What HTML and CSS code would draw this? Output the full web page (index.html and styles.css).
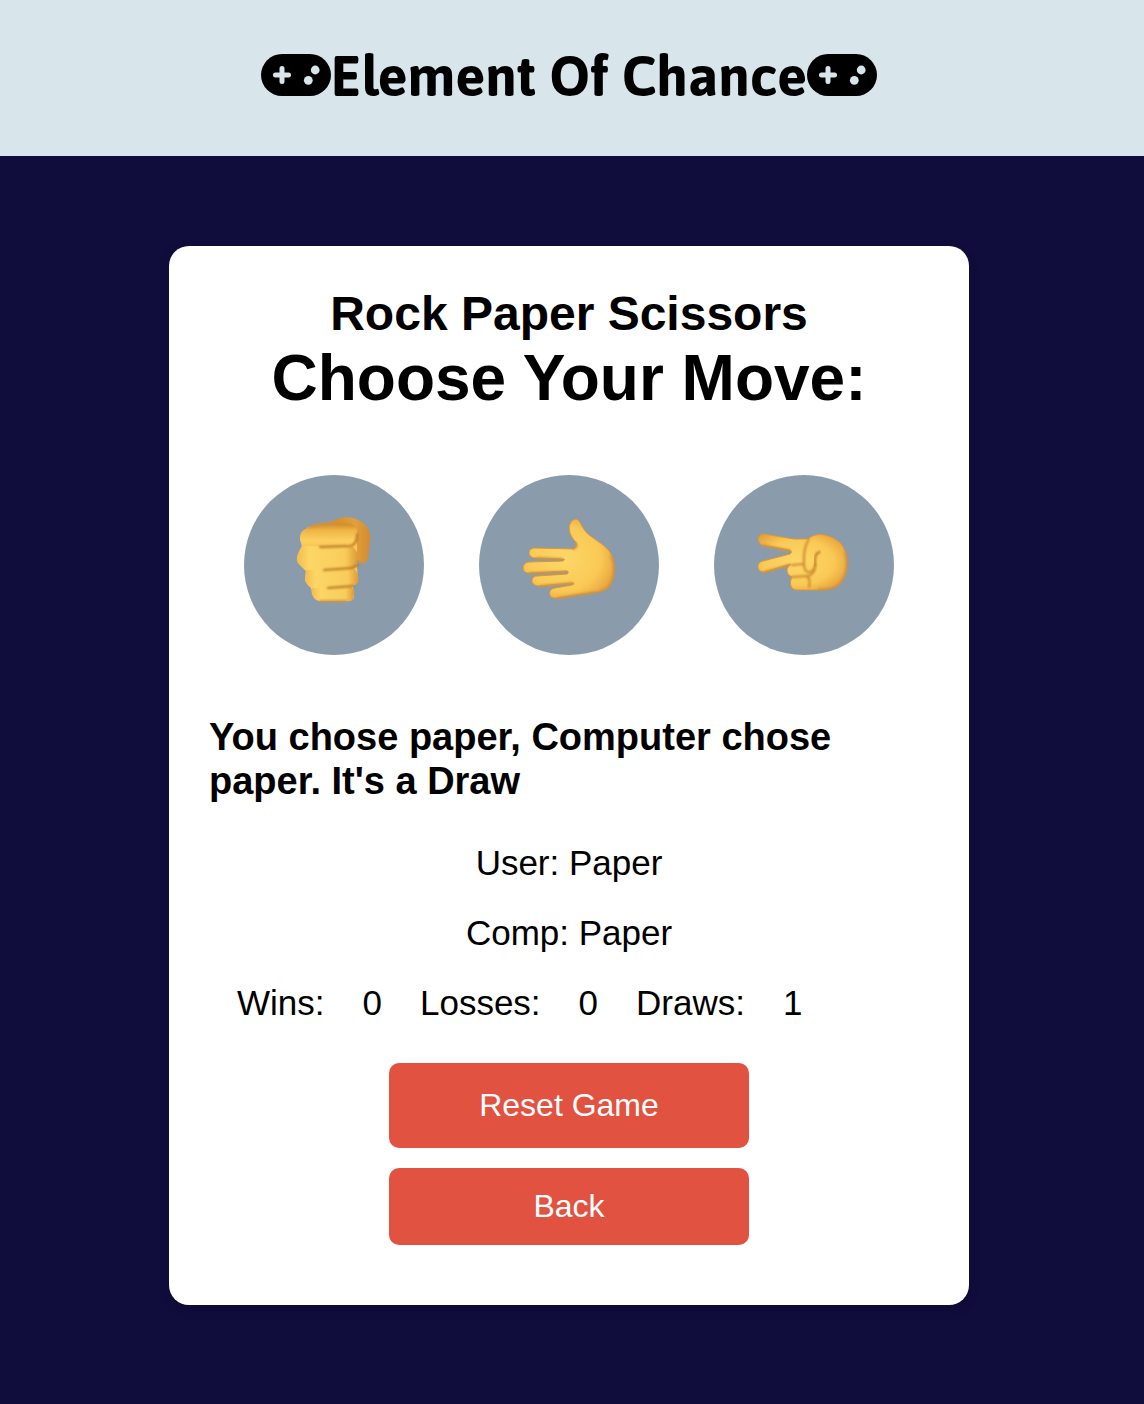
FILE: index.html
```html
<!DOCTYPE html>
<html lang="en">
<head>
<meta charset="utf-8">
<meta name="viewport" content="width=device-width, initial-scale=1">
<title>Element Of Chance</title>
<link rel="stylesheet" href="styles.css">
</head>
<body>
<header class="site-header">
  <svg class="gamepad" viewBox="0 0 70 42" aria-hidden="true"><use href="#pad"/></svg>
  <h1 class="site-title">Element Of Chance</h1>
  <svg class="gamepad" viewBox="0 0 70 42" aria-hidden="true">
    <defs>
      <g id="pad">
        <rect width="70" height="42" rx="21"/>
        <path class="cut-line" d="M14.500 21h13M21 14.500v13"/>
        <circle class="cut" cx="54.200" cy="16" r="4.400"/>
        <circle class="cut" cx="47.300" cy="26.300" r="4.400"/>
      </g>
    </defs>
    <use href="#pad"/>
  </svg>
</header>
<main class="page">
  <section class="card">
    <h2 class="game-name">Rock Paper Scissors</h2>
    <h3 class="prompt">Choose Your Move:</h3>
    <div class="moves">
      <button class="move" type="button" aria-label="Rock">
        <svg class="hand" viewBox="0 0 100 110">
          <defs>
            <radialGradient id="skin" cx=".45" cy=".5" r=".62">
              <stop offset="0" stop-color="#fdd768"/>
              <stop offset=".65" stop-color="#fac955"/>
              <stop offset="1" stop-color="#e5a03a"/>
            </radialGradient>
            <linearGradient id="thumb" x1="0" y1="0" x2="1" y2="0">
              <stop offset="0" stop-color="#cf8a2b"/>
              <stop offset=".6" stop-color="#e3a03a"/>
              <stop offset="1" stop-color="#d08c30"/>
            </linearGradient>
            <linearGradient id="knuckle" x1="0" y1="0" x2="0" y2="1">
              <stop offset="0" stop-color="#c98428"/>
              <stop offset=".3" stop-color="#eeb544"/>
              <stop offset=".7" stop-color="#fbd060"/>
              <stop offset="1" stop-color="#f5c452"/>
            </linearGradient>
            <linearGradient id="finger" x1="0" y1="0" x2="1" y2="0">
              <stop offset="0" stop-color="#f3bd4c"/>
              <stop offset=".2" stop-color="#fcd666"/>
              <stop offset=".8" stop-color="#f9cc5a"/>
              <stop offset="1" stop-color="#dc9a38"/>
            </linearGradient>
            <filter id="soft" x="-20%" y="-20%" width="140%" height="140%"><feGaussianBlur stdDeviation="0.8"/></filter>
          </defs>
          <path fill="url(#thumb)" d="M47 17C58 10 71 11 79 18C86 23 87 30 86 36L84 54Q83 58 78 57L73 55V25Z"/>
          <path fill="#f9ca58" d="M24 22L67 20L73 38L73 61L74 76L69 81L70 92Q69 96 64 96L36 96Q30 96 28 89L27 83L21 76L22 66L14 58Q11 53 16 47L18 42L16 34Z"/>
          <path fill="url(#knuckle)" d="M30 20Q49 16 67 19Q74 21 73 30Q73 40 68 41L27 43Q16 43 16 31Q17 24 30 20Z"/>
          <path fill="url(#finger)" d="M18 41L69 42Q75 46 73 57Q73 63 67 64L24 68Q20 64 14 58Q11 51 18 41Z"/>
          <path fill="url(#finger)" d="M22 65L70 64Q76 68 74 77Q72 81 66 81L29 84Q21 80 21 73Z"/>
          <path fill="url(#finger)" d="M28 83L67 82Q72 85 69 94Q67 97 61 96L36 96Q29 94 28 87Z"/>
          <path class="crease" d="M36 42L67 41Q73 39 73 29M40 65L68 63L74 60M44 83L69 81"/>
          <path class="edge" d="M26 22Q49 15 67 19M73 57L81 57M36 96H63"/>
        </svg>
      </button>
      <button class="move" type="button" aria-label="Paper">
        <svg class="hand hand-wide" viewBox="0 0 110 110">
          <path class="hand-shape" d="M62 14C66 14 68 24 74 29C81 35 90 39 96 47C101 55 101 70 97 78C93 85 88 86 82 87L42 93C34 94 33 84 41 83L58 80Q62 78 58 78L25 81C16 81 16 71 23 71L53 69Q56 67 53 66L15 68C7 68 7 58 15 57L49 56Q52 54 49 54L22 53C13 53 13 43 21 43L60 44C64 41 63 38 60 35C56 30 54 24 56 19Q58 14 62 14Z"/>
          <path class="edge" d="M97 51Q103 66 96 79Q93 84 86 86M44 93L82 87M23 53L48 54M16 68L52 67M26 81L58 78M60 44Q64 41 62 38"/>
        </svg>
      </button>
      <button class="move" type="button" aria-label="Scissors">
        <svg class="hand hand-wide" viewBox="0 0 110 90">
          <path class="hand-shape" d="M15 19L45 24L59 24C66 17 78 19 86 24C101 31 101 58 90 69C82 76 66 75 50 75C41 76 40 68 43 62C36 59 37 52 42 49L15 57C7 57 7 47 14 46L41 39Q44 37 41 35L13 30C7 27 9 18 15 19Z"/>
          <path class="crease" d="M66 51V45Q66 38 71 37"/>
          <path class="crease crease-light" d="M60 24Q54 32 55 51Q57 60 63 56Q66 54 66 50M66 54Q64 60 59 61M43 50L54 49M43 62L58 61Q62 65 60 72"/>
          <path class="edge" d="M96 38Q101 58 90 69Q83 75 70 74M15 57L40 50M14 30L41 36"/>
        </svg>
      </button>
    </div>
    <h4 class="result">You chose paper, Computer chose paper. It's a Draw</h4>
    <p class="pick">User: Paper</p>
    <p class="pick">Comp: Paper</p>
    <div class="score">
      <span>Wins:</span><span>0</span>
      <span>Losses:</span><span>0</span>
      <span>Draws:</span><span>1</span>
    </div>
    <div class="actions">
      <button class="action action-tall" type="button">Reset Game</button>
      <button class="action" type="button">Back</button>
    </div>
  </section>
</main>
</body>
</html>
```
FILE: styles.css
```css
* {
  box-sizing: border-box;
}

body {
  margin: 0;
  min-height: 100vh;
  background: #100c3c;
  color: #000;
  font-family: "Liberation Sans", Arial, sans-serif;
}

h1, h2, h3, h4, p {
  margin: 0;
}

.site-header {
  display: flex;
  justify-content: center;
  align-items: center;
  padding: 39px 6px 45px 0;
  background: #d8e5ea;
}

.site-title {
  padding-top: 2px;
  font-family: Asap, Roboto, sans-serif;
  font-size: 56px;
  line-height: 70px;
  font-weight: 700;
}

.gamepad {
  width: 70px;
  height: 42px;
  flex: none;
}

.cut {
  fill: #d8e5ea;
}

.cut-line {
  stroke: #d8e5ea;
  stroke-width: 5;
  stroke-linecap: round;
}

.page {
  padding: 90px 6px 99px 0;
}

.card {
  max-width: 800px;
  margin: 0 auto;
  padding: 40px 40px 60px;
  border-radius: 20px;
  background: #fff;
  box-shadow: 0 4px 12px rgba(0, 0, 0, 0.1);
}

.game-name {
  font-size: 48px;
  line-height: 56px;
  text-align: center;
}

.prompt {
  font-size: 64px;
  line-height: 72px;
  text-align: center;
}

.moves {
  display: flex;
  justify-content: center;
  gap: 55px;
  margin: 61px 0 60px;
}

.move {
  display: flex;
  justify-content: center;
  width: 180px;
  height: 180px;
  padding: 30px 0 0;
  border: 0;
  border-radius: 50%;
  background: #8a9bab;
}

.hand {
  width: 100px;
  height: 110px;
}

.hand-wide {
  width: 110px;
}

.hand-shape {
  fill: url(#skin);
  stroke: #d9973a;
  stroke-width: 1;
}

.crease,
.edge {
  fill: none;
  stroke: #b87622;
  stroke-width: 2;
  stroke-linecap: round;
  filter: url(#soft);
}

.crease-light {
  stroke: #cc8a2e;
}

.edge {
  stroke: #d6943a;
}

.result {
  font-size: 38px;
  line-height: 44px;
}

.pick {
  margin-top: 28px;
  font-size: 35px;
  line-height: 42px;
  text-align: center;
}

.result + .pick {
  margin-top: 39px;
}

.score {
  display: flex;
  gap: 38px;
  margin: 28px 0 0 28px;
  font-size: 35px;
  line-height: 42px;
}

.actions {
  display: flex;
  flex-direction: column;
  align-items: center;
  gap: 20px;
  margin-top: 39px;
}

.action {
  width: 50%;
  padding: 20px;
  border: 0;
  border-radius: 10px;
  background: #e15241;
  color: #fff;
  font-family: inherit;
  font-size: 32px;
  line-height: 37px;
}

.action-tall {
  padding: 24px 20px;
}
```
